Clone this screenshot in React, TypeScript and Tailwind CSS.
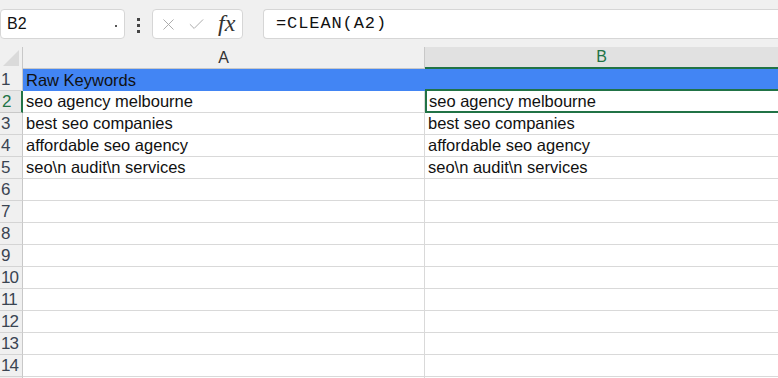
import { X, Check } from 'lucide-react';

const rows: [string, string][] = [
  ['Raw Keywords', ''],
  ['seo agency melbourne', 'seo agency melbourne'],
  ['best seo companies', 'best seo companies'],
  ['affordable seo agency', 'affordable seo agency'],
  ['seo\\n audit\\n services', 'seo\\n audit\\n services'],
  ['', ''],
  ['', ''],
  ['', ''],
  ['', ''],
  ['', ''],
  ['', ''],
  ['', ''],
  ['', ''],
  ['', ''],
];

export default function App() {
  return (
    <div className="w-[778px] h-[378px] overflow-hidden bg-white font-['Liberation_Sans',Arial,sans-serif] text-[#111]">
      {/* Formula bar */}
      <div className="h-[47px] bg-[#f0f0f0] flex items-start pt-[9px]">
        <div className="w-[125px] h-[30px] bg-white border border-[#d6d6d6] rounded-[4px] flex items-center pl-[6px] pr-[7px] text-[16px]">
          <span className="flex-1">B2</span>
          <span className="w-[2px] h-[2px] bg-[#555] mt-[4px]" />
        </div>
        <div className="w-[27px] flex flex-col items-center gap-[3px] pt-[9px]">
          <span className="w-[3px] h-[3px] bg-[#444]" />
          <span className="w-[3px] h-[3px] bg-[#444]" />
          <span className="w-[3px] h-[3px] bg-[#444]" />
        </div>
        <div className="w-[91px] h-[30px] bg-white border border-[#d6d6d6] rounded-[4px] flex items-center pl-[6px] gap-[9px]">
          <X className="w-[19px] h-[19px] text-[#a8a8a8]" strokeWidth={1.2} />
          <Check className="w-[19px] h-[19px] text-[#a8a8a8]" strokeWidth={1.2} />
          <span className="ml-[3px] font-['Liberation_Serif',serif] italic text-[24px] text-[#333] leading-none -mt-[3px]">fx</span>
        </div>
        <div className="ml-[20px] flex-1 h-[30px] bg-white border border-[#d6d6d6] border-r-0 rounded-l-[4px] flex items-center pl-[12px] font-['Liberation_Mono',monospace] text-[17px] tracking-[0.9px]">
          =CLEAN(A2)
        </div>
      </div>

      {/* Column headers */}
      <div className="flex h-[22px] text-[16px]">
        <div className="w-[23px] bg-[#f0f0f0] border-r border-[#c8c8c8] relative">
          <div className="absolute right-[3px] bottom-[3px] w-0 h-0 border-l-[16px] border-l-transparent border-b-[16px] border-b-[#dadada]" />
        </div>
        <div className="w-[402px] bg-[#f0f0f0] border-r border-[#c8c8c8] border-b border-b-[#c8c8c8] flex items-center justify-center text-[#333]">
          A
        </div>
        <div className="flex-1 bg-[#e1e1e1] border-b-2 border-[#217346] flex items-center justify-center text-[#217346]">
          B
        </div>
      </div>

      {/* Grid */}
      {rows.map(([a, b], i) => {
        const n = i + 1;
        const blue = n === 1;
        const sel = n === 2;
        return (
          <div key={n} className="flex h-[22px] text-[16.5px]">
            <div
              className={
                sel
                  ? 'w-[23px] bg-[#e8e8e8] border-r-2 border-[#217346] border-b border-b-[#c8c8c8] pl-[2px] flex items-center text-[#217346] text-[17px]'
                  : 'w-[23px] bg-[#f0f0f0] border-r border-[#c8c8c8] border-b border-b-[#d4d4d4] pl-[1px] flex items-center text-[#3a4452] text-[17px] tracking-[-1px]'
              }
            >
              {n}
            </div>
            <div
              className={
                blue
                  ? 'w-[402px] bg-[#4285f4] pl-[3px] flex items-center'
                  : 'w-[402px] border-r border-b border-[#d9d9d9] pl-[3px] flex items-center'
              }
            >
              {a}
            </div>
            <div
              className={
                blue
                  ? 'flex-1 bg-[#4285f4] border-b-2 border-[#217346]'
                  : sel
                    ? 'flex-1 border-2 border-t-0 border-r-0 border-[#217346] pl-[2px] flex items-center'
                    : 'flex-1 border-b border-[#d9d9d9] pl-[3px] flex items-center'
              }
            >
              {b}
            </div>
          </div>
        );
      })}
      <div className="flex h-[2px]">
        <div className="w-[23px] bg-[#f0f0f0] border-r border-[#c8c8c8]" />
        <div className="w-[402px] border-r border-[#d9d9d9]" />
      </div>
    </div>
  );
}
